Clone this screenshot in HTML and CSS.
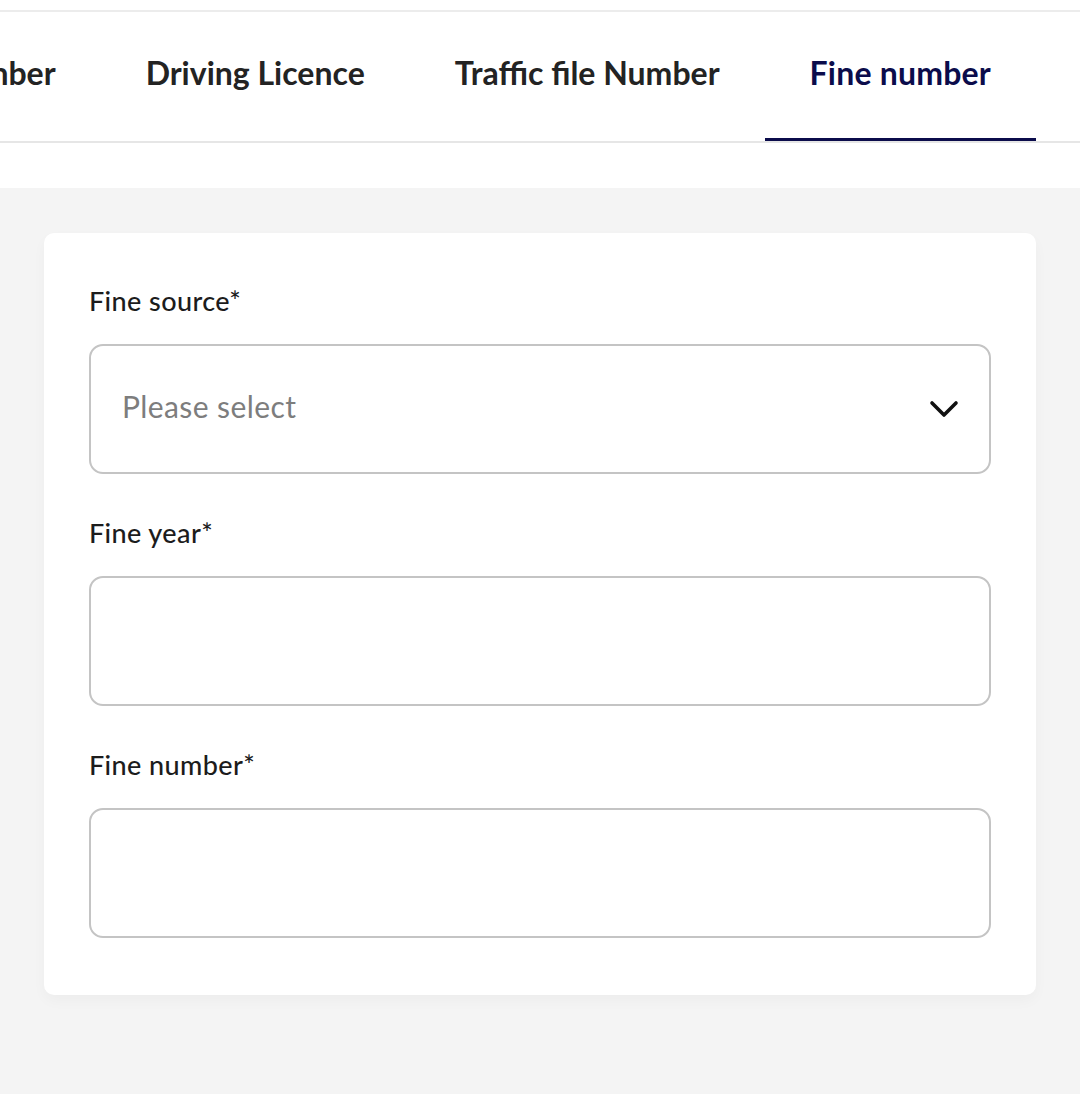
FILE: index.html
```html
<!DOCTYPE html>
<html lang="en">
<head>
<meta charset="utf-8">
<title>Fine search</title>
<link rel="stylesheet" href="styles.css">
</head>
<body>
  <div class="topline"></div>
  <nav class="tabs">
    <div class="tab-track">
      <div class="tab">Plate Number</div>
      <div class="tab">Driving Licence</div>
      <div class="tab">Traffic file Number</div>
      <div class="tab active">Fine number</div>
    </div>
  </nav>
  <div class="spacer"></div>
  <main class="content">
    <section class="card">
      <div class="field">
        <label class="label">Fine source*</label>
        <div class="box select">
          <span class="placeholder">Please select</span>
          <svg class="chev" width="30" height="20" viewBox="0 0 30 20"><path d="M3 4 L15 16 L27 4" fill="none" stroke="#111" stroke-width="3.6" stroke-linecap="round" stroke-linejoin="round"/></svg>
        </div>
      </div>
      <div class="field">
        <label class="label">Fine year*</label>
        <div class="box"></div>
      </div>
      <div class="field">
        <label class="label">Fine number*</label>
        <div class="box"></div>
      </div>
    </section>
  </main>
</body>
</html>
```
FILE: styles.css
```css
html, body {
  margin: 0;
  padding: 0;
}
body {
  width: 1080px;
  height: 1094px;
  background: #f4f4f4;
  font-family: Lato, "Open Sans", sans-serif;
  overflow: hidden;
}
.topline {
  height: 10px;
  background: #fff;
  border-bottom: 2px solid #ececec;
}
.tabs {
  background: #fff;
  height: 131px;
  border-bottom: 2px solid #e6e6e6;
  box-sizing: border-box;
  overflow: hidden;
}
.tab-track {
  display: flex;
  justify-content: flex-end;
  padding-right: 44px;
  height: 100%;
}
.tab {
  flex: none;
  padding: 0 45px;
  display: flex;
  align-items: center;
  padding-bottom: 8px;
  font-size: 32px;
  font-weight: 700;
  color: #232323;
  position: relative;
}
.tab.active {
  color: #0b0c4b;
  letter-spacing: 0.2px;
}
.tab.active::after {
  content: "";
  position: absolute;
  left: 0;
  right: 0;
  bottom: -2px;
  height: 5px;
  background: #0b0c4b;
}
.spacer {
  height: 45px;
  background: #fff;
}
.content {
  padding: 45px 44px 0;
}
.card {
  background: #fff;
  border-radius: 10px;
  box-shadow: 0 6px 14px rgba(0,0,0,0.03);
  padding: 52px 45px 57px;
  display: flex;
  flex-direction: column;
  gap: 43px;
}
.field {
  display: flex;
  flex-direction: column;
  gap: 27px;
}
.label {
  font-size: 27px;
  line-height: 32px;
  font-weight: 500;
  letter-spacing: 0.4px;
  color: #1c1c1c;
}
.box {
  height: 130px;
  box-sizing: border-box;
  border: 2px solid #c4c4c4;
  border-radius: 14px;
  background: #fff;
}
.select {
  display: flex;
  align-items: center;
  justify-content: space-between;
  padding: 0 30px 6px 31px;
}
.placeholder {
  font-size: 30px;
  letter-spacing: 0.4px;
  color: #7d7d7d;
}
.chev {
  display: block;
  margin-top: 6px;
}
```
